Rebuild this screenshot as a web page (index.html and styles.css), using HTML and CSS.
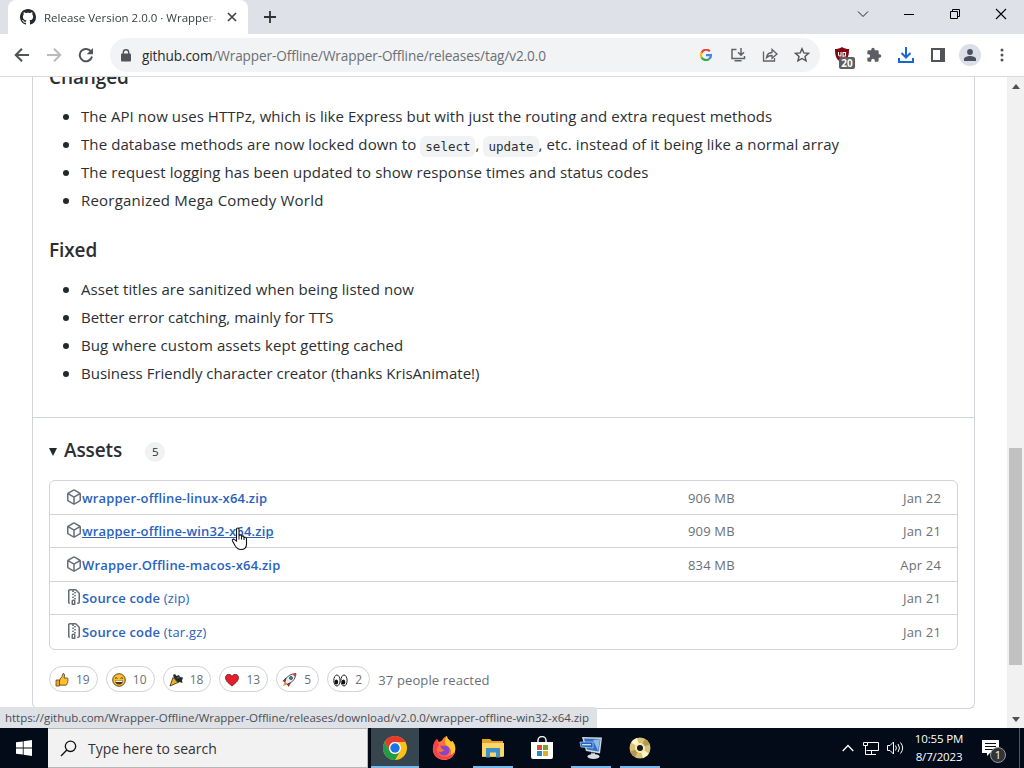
FILE: index.html
```html
<!DOCTYPE html>
<html lang="en">
<head>
  <meta charset="UTF-8">
  <meta name="viewport" content="width=device-width, initial-scale=1.0">
  <title>Release Version 2.0.0 · Wrapper-Offline</title>
  <link rel="stylesheet" href="styles.css">
</head>
<body>
  <!-- Tab strip -->
  <div class="tabstrip">
    <div class="tab">
      <svg class="favicon" width="16" height="16" viewBox="0 0 16 16" fill="#24292f"><path d="M8 0C3.58 0 0 3.58 0 8c0 3.54 2.29 6.53 5.47 7.59.4.07.55-.17.55-.38 0-.19-.01-.82-.01-1.49-2.01.37-2.53-.49-2.69-.94-.09-.23-.48-.94-.82-1.13-.28-.15-.68-.52-.01-.53.63-.01 1.08.58 1.23.82.72 1.21 1.87.87 2.33.66.07-.52.28-.87.51-1.07-1.78-.2-3.64-.89-3.64-3.95 0-.87.31-1.59.82-2.15-.08-.2-.36-1.02.08-2.12 0 0 .67-.21 2.2.82.64-.18 1.32-.27 2-.27.68 0 1.36.09 2 .27 1.53-1.04 2.2-.82 2.2-.82.44 1.1.16 1.92.08 2.12.51.56.82 1.27.82 2.15 0 3.07-1.87 3.75-3.65 3.95.29.25.54.73.54 1.48 0 1.07-.01 1.93-.01 2.2 0 .21.15.46.55.38A8.013 8.013 0 0 0 16 8c0-4.42-3.58-8-8-8z"/></svg>
      <span class="tab-title">Release Version 2.0.0 · Wrapper-Offline</span>
      <svg class="tab-close" width="16" height="16" viewBox="0 0 16 16" fill="none" stroke="#3c4043" stroke-width="1.6"><path d="M4 4l8 8M12 4l-8 8"/></svg>
    </div>
    <svg class="new-tab" width="14" height="14" viewBox="0 0 14 14" fill="none" stroke="#303236" stroke-width="1.8"><path d="M7 1v12M1 7h12"/></svg>
    <div class="window-controls">
      <span class="control"><svg width="12" height="12" viewBox="0 0 12 12" fill="none" stroke="#222"><path d="M1 3.5l5 5 5-5"/></svg></span>
      <span class="control"><svg width="10" height="10" viewBox="0 0 10 10" fill="none" stroke="#000"><path d="M0 5.5h10"/></svg></span>
      <span class="control"><svg width="10" height="10" viewBox="0 0 10 10" fill="none" stroke="#000"><path d="M.5 2.5h7v7h-7zM2.5 2.5v-2h7v7h-2"/></svg></span>
      <span class="control"><svg width="12" height="12" viewBox="0 0 12 12" fill="none" stroke="#000" stroke-width="1.1"><path d="M1 1l10 10M11 1L1 11"/></svg></span>
    </div>
  </div>

  <!-- Toolbar -->
  <div class="toolbar">
    <span class="tool"><svg width="16" height="16" viewBox="0 0 16 16" fill="none" stroke="#505357" stroke-width="2"><path d="M15 8H2.5M8 1.7L1.7 8 8 14.3"/></svg></span>
    <span class="tool"><svg width="16" height="16" viewBox="0 0 16 16" fill="none" stroke="#b9bbbe" stroke-width="2"><path d="M1 8h12.5M8 1.7L14.3 8 8 14.3"/></svg></span>
    <span class="tool"><svg width="16" height="16" viewBox="0 0 16 16" fill="none" stroke="#505357" stroke-width="2"><path d="M13.2 4.8A6.2 6.2 0 1 0 14 9.5"/><path d="M15 1v6.3H8.700z" fill="#505357" stroke="none"/></svg></span>
    <div class="omnibox">
      <svg class="lock" width="10" height="13" viewBox="0 0 10 13"><rect x="0" y="4.5" width="10" height="8" rx="1" fill="#505357"/><path d="M2.3 5V3.4a2.7 2.7 0 0 1 5.4 0V5" fill="none" stroke="#505357" stroke-width="1.4"/></svg>
      <span class="url"><b>github.com</b>/Wrapper-Offline/Wrapper-Offline/releases/tag/v2.0.0</span>
      <span class="tool"><svg width="12" height="12" viewBox="1 1 12 12" fill="none" stroke-width="2.2"><path d="M10.8 3.3A5 5 0 0 0 2.6 4.6" stroke="#e94335"/><path d="M2.6 4.6a5 5 0 0 0 0 4.8" stroke="#fbbc05"/><path d="M2.6 9.4a5 5 0 0 0 7.6 1.5" stroke="#34a853"/><path d="M10.2 10.9A5 5 0 0 0 12 7.2H7" stroke="#4285f4"/></svg></span>
      <span class="tool"><svg width="16" height="14" viewBox="0 0 16 14" fill="none" stroke="#5f6368" stroke-width="1.5"><path d="M6.5 1.5H2v9h12.500V8M4.500 12.700h7M11 0v7M8 4.200l3 3 3-3"/></svg></span>
      <span class="tool"><svg width="16" height="14" viewBox="0 0 16 14" fill="none" stroke="#5f6368" stroke-width="1.3"><path d="M1.500 3.500v9.500h11v-3M4.500 9.700c.5-3.500 2.300-5 5.500-5.200V1.500L15 6l-5 4.300V7.500c-2.500 0-4 .7-5.500 2.200z"/></svg></span>
      <span class="tool"><svg width="16" height="16" viewBox="0 0 16 16" fill="none" stroke="#505357" stroke-width="1.4"><path d="M8 1.700l1.850 4.250 4.650.4-3.520 3.050 1.070 4.500L8 11.500l-4.050 2.400 1.070-4.500L1.500 6.350l4.650-.4z"/></svg></span>
    </div>
    <span class="tool blocker">
      <svg width="16" height="16" viewBox="0 0 16 16"><path d="M8 0c2.300 1.500 4.500 2 7 2 0 7-1 10.500-7 14C2 12.500 1 9 1 2c2.500 0 4.700-.5 7-2z" fill="#800610"/><path d="M4.500 5v2.800q0 1.200 1.200 1.200H7V5M9 5v6M9 5.500h2.500V9H9" fill="none" stroke="#fff" stroke-width="1.1"/></svg>
      <span class="blocker-count">20</span>
    </span>
    <span class="tool"><svg width="16" height="16" viewBox="0 0 24 24" fill="#5b5e62"><path d="M20.500 11H19V7a2 2 0 0 0-2-2h-4V3.500a2.500 2.500 0 0 0-5 0V5H4a2 2 0 0 0-2 2v3.800h1.500a2.700 2.700 0 0 1 0 5.400H2V20a2 2 0 0 0 2 2h3.800v-1.500a2.700 2.700 0 0 1 5.400 0V22H17a2 2 0 0 0 2-2v-4h1.500a2.500 2.500 0 0 0 0-5z"/></svg></span>
    <span class="tool"><svg width="16" height="16" viewBox="0 0 16 16" fill="none" stroke="#1a66d0" stroke-width="2"><path d="M8 0v10M3.500 6L8 10.500 12.500 6M1 11v4h14v-4"/></svg></span>
    <span class="tool"><svg width="14" height="14" viewBox="0 0 14 14"><path d="M1 1h12v12H1z" fill="none" stroke="#505357" stroke-width="2"/><path d="M9 1h5v12H9z" fill="#505357"/></svg></span>
    <span class="tool"><span class="avatar"><svg width="12" height="12" viewBox="0 0 12 12" fill="#4a5060"><circle cx="6" cy="3" r="2.9"/><path d="M0 12V10c0-2 3.500-3 6-3s6 1 6 3v2z"/></svg></span></span>
    <span class="tool"><svg width="4" height="14" viewBox="0 0 4 14" fill="#505357"><circle cx="2" cy="2" r="1.5"/><circle cx="2" cy="7" r="1.5"/><circle cx="2" cy="12" r="1.5"/></svg></span>
  </div>

  <!-- Page -->
  <div class="viewport">
    <div class="page">
      <div class="release">
        <div class="notes">
          <h3>Changed</h3>
          <ul>
            <li class="snug">The API now uses HTTPz, which is like Express but with just the routing and extra request methods</li>
            <li class="loose">The database methods are now locked down to <code>select</code>, <code>update</code>, etc. instead of it being like a normal array</li>
            <li class="loose">The request logging has been updated to show response times and status codes</li>
            <li class="looser">Reorganized Mega Comedy World</li>
          </ul>
          <h3>Fixed</h3>
          <ul>
            <li class="loose">Asset titles are sanitized when being listed now</li>
            <li>Better error catching, mainly for TTS</li>
            <li class="loose">Bug where custom assets kept getting cached</li>
            <li>Business Friendly character creator (thanks KrisAnimate!)</li>
          </ul>
        </div>
        <div class="assets">
          <div class="assets-head">
            <span class="triangle"></span>
            <h3>Assets</h3>
            <span class="counter">5</span>
          </div>
          <div class="box">
            <div class="row">
              <svg class="octicon" width="16" height="16" viewBox="0 0 16 16"><use href="#package"/></svg>
              <a class="name">wrapper-offline-linux-x64.zip</a><span class="size">906 MB</span><span class="date">Jan 22</span>
            </div>
            <div class="row">
              <svg class="octicon" width="16" height="16" viewBox="0 0 16 16"><use href="#package"/></svg>
              <a class="name hovered">wrapper-offline-win32-x64.zip</a><span class="size">909 MB</span><span class="date">Jan 21</span>
            </div>
            <div class="row">
              <svg class="octicon" width="16" height="16" viewBox="0 0 16 16"><use href="#package"/></svg>
              <a class="name">Wrapper.Offline-macos-x64.zip</a><span class="size">834 MB</span><span class="date">Apr 24</span>
            </div>
            <div class="row">
              <svg class="octicon" width="16" height="16" viewBox="0 0 16 16"><use href="#zip"/></svg>
              <a class="name">Source code <span>(zip)</span></a><span class="date">Jan 21</span>
            </div>
            <div class="row">
              <svg class="octicon" width="16" height="16" viewBox="0 0 16 16"><use href="#zip"/></svg>
              <a class="name">Source code <span>(tar.gz)</span></a><span class="date">Jan 21</span>
            </div>
          </div>
          <div class="reactions">
            <span class="pill"><svg width="14" height="14" viewBox="0 0 14 14"><path d="M5 6l2-2.500 1-3c1.600 0 2 1.500 1 4.500h3.200c1 0 1 1.500.4 1.800.7.500.5 1.600-.1 1.900.4.700.1 1.500-.5 1.800.1 1-.5 1.700-1.500 1.700H6l-2-1z" fill="#fdbf2d" stroke="#4c3515" stroke-width=".8"/><path d="M1 7h3.500v6H1z" fill="#f5a81c" stroke="#4c3515" stroke-width=".7"/></svg>19</span>
            <span class="pill"><svg width="14" height="14" viewBox="0 0 14 14"><circle cx="7" cy="7" r="6.3" fill="#fdc02f" stroke="#4c3515" stroke-width=".9"/><path d="M3 7.500h8c0 2.700-1.500 4-4 4s-4-1.300-4-4z" fill="#493120"/><path d="M3.500 7.700h7v1.300h-7z" fill="#fff"/><path d="M3 5.500q1.200-1.500 2.500 0M8.500 5.500q1.200-1.500 2.500 0" fill="none" stroke="#493120"/></svg>10</span>
            <span class="pill"><svg width="14" height="14" viewBox="0 0 14 14"><path d="M5 5L4 2l2-1 1.500 2L10 2l1 2 3 .5-1 3 .5 2.500-3-1L9 10z" fill="#252c24"/><path d="M4 4.500l5 5L1 13z" fill="#f4ae2a" stroke="#382910" stroke-width=".8"/><path d="M8 5.500l3-2" stroke="#2e6d80" stroke-width="1.2"/></svg>18</span>
            <span class="pill"><svg width="14" height="14" viewBox="0 0 14 14"><path d="M7 13C2.500 9.500.5 7.300.5 4.600c0-3.300 4.500-4.600 6.500-1.300 2-3.300 6.500-2 6.500 1.300C13.500 7.300 11.500 9.500 7 13z" fill="#e81d2c" stroke="#5b1515" stroke-width=".8"/></svg>13</span>
            <span class="pill"><svg width="15" height="14" viewBox="0 0 15 14"><path d="M3.500 6C5.500 3 9 .8 14 .5c-.3 4.500-2.500 7.800-6 9.500L5 11.500 2.500 9z" fill="#e9eef1" stroke="#292929" stroke-width=".8"/><path d="M10.500 1.200L14 .5l-.8 3.500z" fill="#e83341"/><path d="M4 5L.8 8l2.500.4zM8.500 10l-2 3.500-1-2.500z" fill="#c92938" stroke="#3c1c1c" stroke-width=".5"/><path d="M1 13l1.500-3.500L5 11.500z" fill="#f08c29"/><circle cx="9" cy="5" r="1.5" fill="#36a0c0" stroke="#222" stroke-width=".7"/></svg>5</span>
            <span class="pill"><svg width="15" height="14" viewBox="0 0 15 14"><ellipse cx="3.9" cy="7.5" rx="3.1" ry="5.5" fill="#fff" stroke="#222"/><ellipse cx="11" cy="7.5" rx="3.1" ry="5.5" fill="#fff" stroke="#222"/><ellipse cx="3.3" cy="9" rx="1.9" ry="2.6" fill="#111"/><ellipse cx="10.4" cy="9" rx="1.9" ry="2.6" fill="#111"/></svg>2</span>
            <span class="reacted">37 people reacted</span>
          </div>
        </div>
      </div>
    </div>
    <div class="scrollbar">
      <span class="arrow up"></span>
      <span class="thumb"></span>
      <span class="arrow down"></span>
    </div>
    <div class="status">https://github.com/Wrapper-Offline/Wrapper-Offline/releases/download/v2.0.0/wrapper-offline-win32-x64.zip</div>
    <svg class="cursor" width="18" height="24" viewBox="0 0 18 24"><path d="M5.500 14V2.500c0-2 2.500-2 2.500 0V9c0-1.500 2.500-1.500 2.500 0v.8c.3-1.300 2.500-1.200 2.500.4v.8c.4-1.200 2.500-.9 2.500.7V17c0 3-1.500 5.500-5.500 5.500-3.500 0-4.500-1.500-6-4L1.500 14c-.7-1.500 1-2.500 2-1.300z" fill="#fff" stroke="#111" stroke-width="1.1"/><path d="M8 9v3.500M10.500 9.500v3M13 10.500v2.500" stroke="#111"/></svg>
  </div>

  <!-- Taskbar -->
  <div class="taskbar">
    <span class="start"><svg width="16" height="16" viewBox="0 0 16 16" fill="#fff"><path d="M0 2.300l6.800-.9v6.200H0zM7.600 1.300L16 .1v7.500H7.600zM0 8.400h6.800v6.200L0 13.700zM7.600 8.400H16v7.500l-8.400-1.200z"/></svg></span>
    <div class="search">
      <svg width="17" height="17" viewBox="0 0 17 17" fill="none" stroke="#111" stroke-width="1.3"><circle cx="10.5" cy="6.3" r="5.2"/><path d="M6.800 10L1 16"/></svg>
      <span>Type here to search</span>
    </div>
    <div class="apps">
      <span class="app active"><svg width="24" height="24" viewBox="0 0 24 24"><circle cx="12" cy="12" r="12" fill="#fbc116"/><path d="M1.600 6A12 12 0 0 1 22.400 6H12a6 6 0 0 0-5.200 9z" fill="#e33b2e"/><path d="M1.600 6a12 12 0 0 0 10.400 18l5.200-9a6 6 0 0 1-10.400 0z" fill="#229b48"/><circle cx="12" cy="12" r="6" fill="#fff"/><circle cx="12" cy="12" r="4.7" fill="#1a73e8"/></svg></span>
      <span class="app"><svg width="24" height="24" viewBox="0 0 24 24"><path d="M3.500 5.500L5 3l2 3 3-1.500C11 2 13 .5 15 0c0 3 3 4 4 6l1.500-1C23.500 9 24 13 22.500 17 21 21.500 17 24 12 24 5.500 24 .5 19 .8 12.500 1 10 2 7.500 3.500 5.500z" fill="#ff7139"/><path d="M15 0c0 3 3 4 4 6l1.500-1c3 4 3.500 8 2 12-1 2-3 4-5 5 3-5 2-10-2.500-12C12 8 12.500 3 15 0z" fill="#ffc72e"/><path d="M8 9.500l4 .5c5-2 7.500 4.500 4 8-3 2.800-8.500 1.500-9.500-2.500 2 1 4.500.5 6-1.500-1.500 0-3-1-4.500-4.500z" fill="#8b45c8"/><path d="M1 12c0 7 5 11.500 11 11.500S22 20 23 15c-3 6-13 8-17 2-2-3-1-6 1-7.500L5 3C2 5 1 8.500 1 12z" fill="#f8404d"/></svg></span>
      <span class="app running"><svg width="24" height="20" viewBox="0 0 24 20"><path d="M1 1h8l2 2h11v16H1z" fill="#e2a528"/><path d="M1 5h22v13.500H1z" fill="#fcd667"/><path d="M5 10h14v9.500h-4v-5H9v5H5z" fill="#3d91c6"/></svg></span>
      <span class="app"><svg width="24" height="24" viewBox="0 0 24 24"><path d="M8 7V4.500a4 4 0 0 1 8 0V7" fill="none" stroke="#f2f2f2" stroke-width="1.5"/><path d="M1 6h22v15a2 2 0 0 1-2 2H3a2 2 0 0 1-2-2z" fill="#fff"/><path d="M7 9h5v5H7z" fill="#d55328"/><path d="M13 9h5v5h-5z" fill="#78a332"/><path d="M7 15h5v5H7z" fill="#258bc4"/><path d="M13 15h5v5h-5z" fill="#e4ab26"/></svg></span>
      <span class="app running"><svg width="24" height="24" viewBox="0 0 24 24"><path d="M3 1l20 .5-2 16L7 15z" fill="#cfd7df"/><path d="M5 2.500l16.500.5-2 12.500L8 13.500z" fill="#326fc4"/><path d="M14 4l7-.8-2 11.500z" fill="#8ebbe8"/><path d="M1 6h13v6l-12-1z" fill="#1f62c0" stroke="#a4c9ef" stroke-width=".8"/><path d="M3 8.700h9" stroke="#d0e5fb" stroke-width="1.3"/><path d="M12 16.500l4 .5v4h-4z" fill="#9aa4ad"/><ellipse cx="14.5" cy="20.5" rx="6" ry="2.5" fill="#d8dde1"/></svg></span>
      <span class="app running"><svg width="22" height="22" viewBox="0 0 22 22"><circle cx="11" cy="11" r="10.5" fill="#d6c279"/><path d="M11 11L2 5.500A10.500 10.500 0 0 1 8 1zM11 11l9 5.500a10.500 10.500 0 0 1-6 4.500z" fill="#fff5c9"/><path d="M11 11l-5 9a10.500 10.500 0 0 1-5-5.500zM11 11l5-9a10.500 10.500 0 0 1 5 5.500z" fill="#b5984b"/><circle cx="11" cy="11" r="5" fill="#f5ebbb"/><circle cx="11" cy="11" r="3" fill="#151515"/></svg></span>
    </div>
    <div class="tray">
      <svg width="12" height="8" viewBox="0 0 12 8" fill="none" stroke="#fff" stroke-width="1.3"><path d="M.7 7L6 1.500 11.300 7"/></svg>
      <svg width="17" height="15" viewBox="0 0 17 15" fill="none" stroke="#fff"><path d="M5.500 1.500h11v8h-12M9.500 9.500v4M6 13.500h8M1.500 1.500h4v3h-4zM3.500 4.500v9H6"/></svg>
      <svg width="17" height="14" viewBox="0 0 17 14" fill="none" stroke="#fff"><path d="M.5 4.500h2.500l3.500-3.500v12L3 9.500H.5zM8.500 4.500q1.800 2.500 0 5M11 3q3 4 0 8M13.500 1.500q4.300 5.500 0 11"/></svg>
      <div class="clock"><span>10:55 PM</span><span>8/7/2023</span></div>
      <span class="notify">
        <svg width="17" height="17" viewBox="0 0 17 17"><path d="M0 0h17v13h-9l-3 3v-3H0z" fill="#fff"/><path d="M3 3.500h11M3 6.500h11M3 9.500h8" stroke="#080d18"/></svg>
        <span class="notify-count">1</span>
      </span>
      <span class="show-desktop"></span>
    </div>
  </div>

  <svg class="defs" width="0" height="0">
    <defs>
      <path id="package" d="m8.878.392 5.250 3.045c.54.314.872.89.872 1.514v6.098a1.750 1.750 0 0 1-.872 1.514l-5.250 3.045a1.750 1.750 0 0 1-1.756 0l-5.250-3.045A1.750 1.750 0 0 1 1 11.049V4.951c0-.624.332-1.201.872-1.514L7.122.392a1.750 1.750 0 0 1 1.756 0ZM7.875 1.690l-4.630 2.685L8 7.133l4.755-2.758-4.630-2.685a.248.248 0 0 0-.25 0ZM2.500 5.677v5.372c0 .09.047.171.125.216l4.625 2.683V8.432Zm6.250 8.271 4.625-2.683a.25.25 0 0 0 .125-.216V5.677L8.750 8.432Z"/>
      <path id="zip" d="M3.500 1.750v11.500c0 .09.048.173.126.217a.75.75 0 0 1-.752 1.298A1.748 1.748 0 0 1 2 13.250V1.750C2 .784 2.784 0 3.750 0h5.586c.464 0 .909.185 1.237.513l2.914 2.914c.329.328.513.773.513 1.237v8.586A1.750 1.750 0 0 1 12.250 15h-.5a.75.75 0 0 1 0-1.500h.5a.25.25 0 0 0 .25-.25V4.664a.25.25 0 0 0-.073-.177L9.513 1.573a.25.25 0 0 0-.177-.073H7.250a.75.75 0 0 1 0 1.500h-.5a.75.75 0 0 1 0-1.500h-3a.25.25 0 0 0-.25.25Zm3.750 8.750h.5c.966 0 1.750.784 1.750 1.750v3a.75.75 0 0 1-.75.75h-2.500a.75.75 0 0 1-.75-.75v-3c0-.966.784-1.750 1.750-1.750ZM6 5.250a.75.75 0 0 1 .75-.75h.5a.75.75 0 0 1 0 1.500h-.5A.75.75 0 0 1 6 5.250Zm.75 2.250h.5a.75.75 0 0 1 0 1.500h-.5a.75.75 0 0 1 0-1.500ZM8 6.750A.75.75 0 0 1 8.750 6h.5a.75.75 0 0 1 0 1.500h-.5A.75.75 0 0 1 8 6.750ZM8.750 3h.5a.75.75 0 0 1 0 1.500h-.5a.75.75 0 0 1 0-1.500ZM8 9.750A.75.75 0 0 1 8.750 9h.5a.75.75 0 0 1 0 1.500h-.5A.75.75 0 0 1 8 9.750Zm-1 2.500v2.250h1v-2.250a.25.25 0 0 0-.25-.25h-.5a.25.25 0 0 0-.25.25Z"/>
    </defs>
  </svg>
</body>
</html>
```
FILE: styles.css
```css
/* General Styles */
* {
  box-sizing: border-box;
}
body {
  margin: 0;
  width: 1024px;
  height: 768px;
  overflow: hidden;
  display: flex;
  flex-direction: column;
  font-family: "Open Sans", "Noto Sans", sans-serif;
  font-size: 15px;
  color: #2b2f33;
  background: #fff;
}
svg {
  display: block;
  flex: none;
}
.defs {
  position: absolute;
}

/* Tab strip */
.tabstrip {
  height: 34px;
  flex: none;
  display: flex;
  align-items: center;
  padding-left: 8px;
  background: #dee1e8;
}
.tab {
  width: 240px;
  height: 34px;
  display: flex;
  align-items: center;
  padding: 0 8px 0 12px;
  background: #fff;
  border-radius: 8px 8px 0 0;
}
.tab-title {
  width: 172px;
  margin-left: 8px;
  overflow: hidden;
  white-space: nowrap;
  font-size: 11.5px;
  color: #3c4043;
  -webkit-mask-image: linear-gradient(to right, #000 160px, transparent 176px);
  mask-image: linear-gradient(to right, #000 160px, transparent 176px);
}
.tab-close {
  margin-left: 8px;
}
.new-tab {
  margin-left: 15px;
}
.window-controls {
  margin-left: auto;
  display: flex;
}
.control {
  width: 46px;
  height: 34px;
  padding-bottom: 6px;
  display: flex;
  align-items: center;
  justify-content: center;
}

/* Toolbar */
.toolbar {
  height: 43px;
  flex: none;
  display: flex;
  align-items: center;
  padding: 0 6px;
  border-bottom: 1px solid #d8dadd;
}
.tool {
  width: 32px;
  height: 32px;
  flex: none;
  display: flex;
  align-items: center;
  justify-content: center;
}
.omnibox {
  width: 710px;
  height: 34px;
  margin: 0 6px 0 8px;
  padding: 0 2px 0 11px;
  display: flex;
  align-items: center;
  background: #f1f3f4;
  border-radius: 17px;
}
.url {
  flex: 1;
  margin-left: 11px;
  font-size: 13.6px;
  letter-spacing: -0.11px;
  color: #6b6f74;
}
.url b {
  font-weight: normal;
  color: #292b2e;
}
.blocker {
  position: relative;
}
.blocker-count {
  position: absolute;
  left: 13px;
  top: 18px;
  width: 16px;
  height: 12px;
  border-radius: 2px;
  background: #5b5e62;
  color: #fff;
  font-size: 10px;
  font-weight: bold;
  line-height: 12px;
  text-align: center;
}
.avatar {
  width: 22px;
  height: 22px;
  border-radius: 50%;
  background: #dcdfe8;
  display: flex;
  align-items: center;
  justify-content: center;
}

/* Page */
.viewport {
  position: relative;
  height: 651px;
  flex: none;
  display: flex;
  overflow: hidden;
}
.page {
  flex: 1;
  padding: 0 32px;
}
.release {
  width: 943px;
  height: 632px;
  border: 1px solid #d0d3d7;
  border-top: 0;
  border-radius: 0 0 6px 6px;
}
.notes {
  display: flow-root;
  height: 340px;
  padding: 0 16px;
}
h3 {
  margin: 0;
  font-size: 19px;
  line-height: 25px;
  font-weight: 600;
  letter-spacing: -0.1px;
}
.notes h3:first-child {
  margin-top: -12px;
}
.notes ul {
  margin: 14px 0 26px;
  padding-left: 32px;
  list-style: none;
}
.notes li {
  height: 24px;
  line-height: 24px;
  white-space: nowrap;
}
.notes li + li {
  margin-top: 4px;
}
.notes li::before {
  content: "";
  display: inline-block;
  width: 6px;
  height: 6px;
  margin: 0 12px 0 -18px;
  border-radius: 50%;
  background: #24292f;
  vertical-align: 2px;
}
.snug {
  letter-spacing: 0.055px;
}
.loose {
  letter-spacing: 0.095px;
}
.looser {
  letter-spacing: 0.21px;
}
code {
  padding: 3px 5px;
  border-radius: 6px;
  background: #f1f2f4;
  font-family: "DejaVu Sans Mono", monospace;
  font-size: 12.5px;
  letter-spacing: 0;
  vertical-align: -1px;
}

/* Assets */
.assets {
  padding: 19px 16px 0;
  border-top: 1px solid #d0d3d7;
}
.assets-head {
  height: 26px;
  display: flex;
  align-items: center;
}
.triangle {
  border: 4.5px solid transparent;
  border-top: 8px solid #24292f;
  border-bottom: 0;
  margin: 3px 6px 0 0;
}
.assets-head h3 {
  margin-left: 1px;
}
.counter {
  width: 20px;
  height: 20px;
  margin: 4px 0 0 23px;
  border-radius: 10px;
  background: #eff1f3;
  font-size: 11.5px;
  line-height: 20px;
  text-align: center;
}
.box {
  height: 170px;
  margin-top: 17px;
  border: 1px solid #d0d3d7;
  border-radius: 6px;
}
.row {
  height: 33.5px;
  display: flex;
  align-items: center;
  padding: 1px 16px 0;
  border-bottom: 1px solid #d0d3d7;
  font-size: 13px;
  letter-spacing: 0.17px;
  color: #6b7076;
}
.row:last-child {
  border-bottom: 0;
}
.octicon {
  fill: #656d76;
  margin-top: -2px;
}
.name {
  width: 606px;
  font-weight: 600;
  color: #2a62bd;
}
.name span {
  font-weight: normal;
}
.hovered {
  text-decoration: underline;
}
.date {
  margin-left: auto;
}

/* Reactions */
.reactions {
  display: flex;
  align-items: center;
  margin-top: 16px;
}
.pill {
  height: 26px;
  margin-right: 8.1px;
  padding: 0 7px 0 5px;
  display: flex;
  align-items: center;
  gap: 7px;
  border: 1px solid #d0d3d7;
  border-radius: 13px;
  font-size: 12px;
  color: #6b7076;
}
.pill svg {
  margin-top: 2px;
}
.reacted {
  padding-top: 2px;
  font-size: 13px;
  letter-spacing: 0.13px;
  color: #6b7076;
}

/* Scrollbar */
.scrollbar {
  width: 17px;
  display: flex;
  flex-direction: column;
  align-items: center;
  padding: 7px 0 6px;
  background: #f1f1f1;
}
.arrow {
  border: 4px solid transparent;
}
.up {
  border-top: 0;
  border-bottom: 5px solid #505050;
}
.down {
  margin-top: auto;
  border-bottom: 0;
  border-top: 5px solid #505050;
}
.thumb {
  width: 13px;
  height: 217px;
  margin-top: 359px;
  background: #c1c1c1;
}

/* Link target and pointer over the page */
.status {
  position: absolute;
  left: 0;
  bottom: 0;
  width: 597px;
  height: 21px;
  padding-left: 5px;
  background: #dee1e6;
  border-top-right-radius: 3px;
  font-size: 11.5px;
  letter-spacing: -0.03px;
  line-height: 21px;
  color: #4a4d51;
  white-space: nowrap;
}
.cursor {
  position: absolute;
  left: 231px;
  top: 450px;
}

/* Taskbar */
.taskbar {
  height: 40px;
  flex: none;
  display: flex;
  background: #020b17;
  color: #fff;
}
.start {
  width: 48px;
  display: flex;
  align-items: center;
  justify-content: center;
}
.search {
  width: 320px;
  display: flex;
  align-items: center;
  padding-left: 12px;
  gap: 11px;
  background: #f2f2f2;
  border: 1px solid #b5b8bb;
  border-left: 0;
  color: #333;
  font-size: 14px;
}
.apps {
  display: flex;
  margin-left: 3px;
  gap: 1px;
}
.app {
  width: 48px;
  display: flex;
  align-items: center;
  justify-content: center;
}
.active {
  background: #36454e;
  border-bottom: 2px solid #76b9ed;
  padding-top: 2px;
}
.running {
  width: 40px;
  margin: 0 4px;
  padding-top: 2px;
  border-bottom: 2px solid #76b9ed;
}
.tray {
  margin-left: auto;
  display: flex;
  align-items: center;
  gap: 8px;
}
.clock {
  width: 52px;
  margin-left: 1px;
  display: flex;
  flex-direction: column;
  align-items: center;
  font-size: 11.5px;
  letter-spacing: -0.15px;
  line-height: 18px;
  white-space: nowrap;
}
.notify {
  position: relative;
  margin-left: 9px;
}
.notify-count {
  position: absolute;
  left: 8px;
  top: 7px;
  width: 16px;
  height: 16px;
  border: 1px solid #999;
  border-radius: 50%;
  background: #30343b;
  font-size: 11px;
  line-height: 14px;
  text-align: center;
}
.show-desktop {
  width: 5px;
  height: 40px;
  margin-left: 12px;
  border-left: 1px solid #515862;
}
```
